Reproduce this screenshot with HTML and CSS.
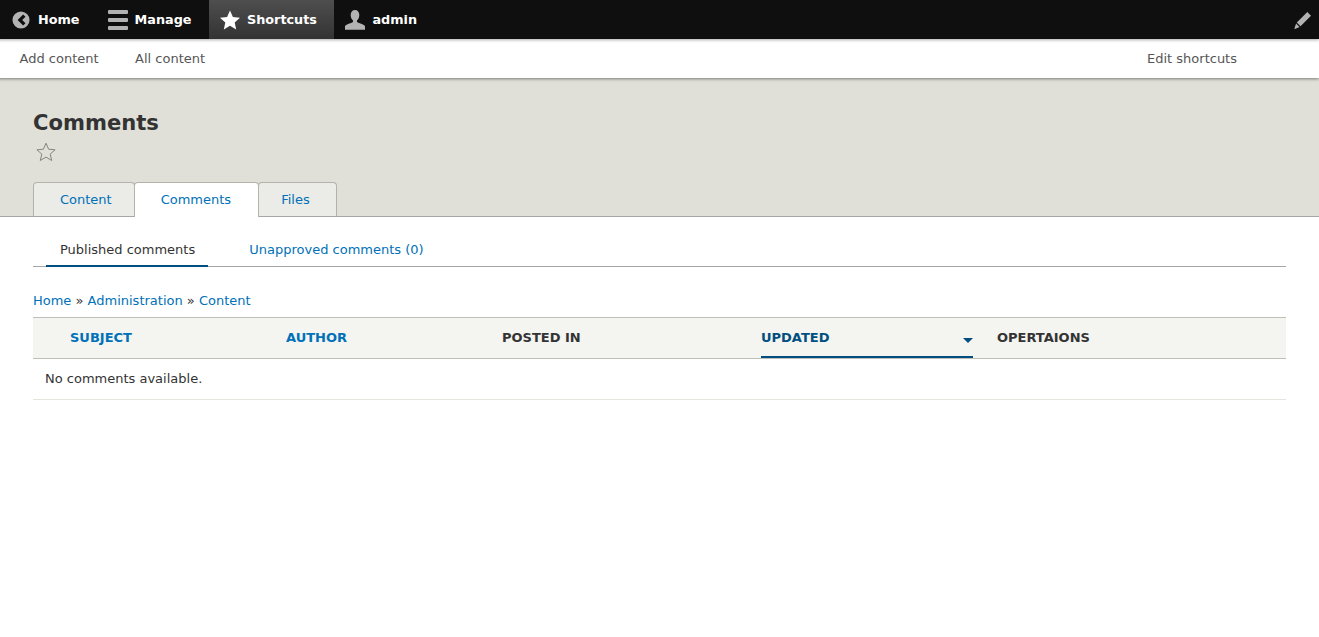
FILE: index.html
```html
<!DOCTYPE html>
<html lang="en">
<head>
<meta charset="utf-8">
<title>Comments</title>
<link rel="stylesheet" href="styles.css">
</head>
<body>
<nav class="toolbar">
  <div class="toolbar-items">
    <a class="tb-item tb-home" href="#">
      <svg class="tb-icon" viewBox="0 0 20 20"><circle cx="10" cy="10" r="9.500" fill="#b3b3b3"/><path d="M12.400 3.800 15 6.400 11.300 10 15 13.600l-2.600 2.600L6.200 10z" fill="#0f0f0f"/></svg>
      <span>Home</span>
    </a>
    <a class="tb-item tb-manage" href="#">
      <svg class="tb-icon" viewBox="0 0 20 20"><g fill="#b3b3b3"><rect y="0" width="20" height="4" rx="1"/><rect y="8" width="20" height="4" rx="1"/><rect y="16" width="20" height="4" rx="1"/></g></svg>
      <span>Manage</span>
    </a>
    <a class="tb-item tb-active" href="#">
      <svg class="tb-icon" viewBox="0 0 20 20"><path d="M10 .5l2.900 6.500 7.100.7-5.300 4.700 1.500 7-6.200-3.600-6.200 3.600 1.500-7L0 7.700l7.100-.7z" fill="#fff"/></svg>
      <span>Shortcuts</span>
    </a>
    <a class="tb-item" href="#">
      <svg class="tb-icon" viewBox="0 0 20 20"><path d="M10 0c2.700 0 4.300 2.100 4.300 5 0 2.300-1 4.400-2.200 5.300-.4.9-.2 1.800.6 2.200 2.500 1 6.300 2 7.300 3.500v3.700H0V16c1-1.500 4.800-2.500 7.300-3.500.8-.4 1-1.300.6-2.200C6.700 9.400 5.700 7.300 5.700 5 5.700 2.100 7.300 0 10 0z" fill="#b3b3b3"/></svg>
      <span>admin</span>
    </a>
  </div>
  <a class="tb-edit" href="#" aria-label="Edit">
    <svg viewBox="0 0 18 18"><path d="M13.300 1 17 4.700 6.500 15.200 2.800 11.500zM2.100 12.500l3.400 3.400L1 18l-.6-.6z" fill="#b3b3b3"/></svg>
  </a>
</nav>
<div class="tray">
  <div class="tray-links">
    <a href="#">Add content</a>
    <a href="#">All content</a>
  </div>
  <a class="tray-edit" href="#">Edit shortcuts</a>
</div>
<header class="page-head">
  <h1>Comments</h1>
  <svg class="fav-star" viewBox="0 0 20 20"><path d="M10 1.200l2.600 6 6.500.6-4.900 4.300 1.500 6.400L10 15.100l-5.700 3.400 1.500-6.400L.9 7.800l6.500-.6z" fill="none" stroke="#85857a" stroke-width="1"/></svg>
  <ul class="tabs">
    <li class="tab-first"><a href="#">Content</a></li>
    <li class="tab-active"><a href="#">Comments</a></li>
    <li class="tab-last"><a href="#">Files</a></li>
  </ul>
</header>
<main class="content">
  <ul class="subtabs">
    <li class="subtab-active"><a href="#">Published comments</a></li>
    <li><a href="#">Unapproved comments (0)</a></li>
  </ul>
  <div class="breadcrumb"><a href="#">Home</a> » <a href="#">Administration</a> » <a href="#">Content</a></div>
  <table class="comments">
    <thead>
      <tr>
        <th class="col-subject"><a href="#">SUBJECT</a></th>
        <th class="col-author"><a href="#">AUTHOR</a></th>
        <th class="col-posted">POSTED IN</th>
        <th class="col-updated"><a href="#" class="sort-active">UPDATED<i class="sort-arrow"></i></a></th>
        <th>OPERTAIONS</th>
      </tr>
    </thead>
    <tbody>
      <tr><td colspan="5">No comments available.</td></tr>
    </tbody>
  </table>
</main>
</body>
</html>
```
FILE: styles.css
```css
* { box-sizing: border-box; }
html, body { margin: 0; padding: 0; }
body {
  font-family: "DejaVu Sans", sans-serif;
  font-size: 13px;
  color: #333;
  background: #fff;
}
a { text-decoration: none; color: #0071b8; }
ul { list-style: none; margin: 0; padding: 0; }

.toolbar {
  display: flex;
  justify-content: space-between;
  height: 39px;
  background: #0f0f0f;
  position: relative;
  z-index: 2;
  box-shadow: -1px 0 3px 1px rgba(0,0,0,.33);
}
.toolbar-items { display: flex; }
.tb-item {
  display: flex;
  align-items: center;
  gap: 7px;
  padding: 0 17px 0 11px;
  color: #fff;
  font-weight: 700;
  font-size: 12.8px;
}
.tb-home { padding-left: 12px; gap: 8px; }
.tb-manage { padding-right: 18px; }
.tb-icon { width: 20px; height: 20px; display: block; flex: none; }
.tb-home .tb-icon { width: 18px; height: 18px; }
.tb-active { background: linear-gradient(#4e4e4e, #333); gap: 6.500px; padding-right: 17.500px; }
.tb-edit { display: flex; align-items: center; padding-right: 7px; }
.tb-edit svg { width: 18px; height: 18px; display: block; }

.tray {
  display: flex;
  justify-content: space-between;
  align-items: center;
  height: 39px;
  padding: 0 82px 0 19.500px;
  background: #fff;
  position: relative;
  z-index: 1;
  box-shadow: -1px 0 3px 1px rgba(0,0,0,.45);
}
.tray a { color: #565656; }
.tray-links { display: flex; gap: 36.500px; }

.page-head {
  height: 139px;
  padding: 31px 2.5% 0;
  background: #e0e0d8;
  border-bottom: 1px solid #a6a6a6;
}
.page-head h1 {
  margin: 0;
  font-size: 21.100px;
  line-height: 28px;
  font-weight: 700;
  color: #333;
}
.fav-star { display: block; width: 20px; height: 20px; margin: 5px 0 0 3px; }
.tabs {
  display: flex;
  margin-top: 20px;
  height: 34px;
}
.tabs li {
  background: #ebebe7;
  border: 1px solid #b3b3ab;
  border-bottom: 0;
  border-radius: 4px 4px 0 0;
  margin-left: -1px;
  height: 34px;
}
.tabs a { display: block; line-height: 33px; }
.tabs .tab-first { margin-left: 0; }
.tab-first a { padding: 0 22px 0 26px; }
.tab-active a { padding: 0 27px 0 26px; }
.tab-last a { padding: 0 26px 0 22px; }
.tabs .tab-active {
  background: #fff;
  height: 35px;
  position: relative;
  z-index: 1;
}

.content { padding: 15px 2.5% 0; }
.subtabs {
  display: flex;
  height: 35px;
  border-bottom: 1px solid #a6a6a6;
  padding-left: 13px;
  gap: 27px;
}
.subtabs li { height: 35px; padding: 0 13px 0 14px; line-height: 36px; }
.subtabs .subtab-active { border-bottom: 2px solid #004f80; }
.subtabs .subtab-active a { color: #333; }
.breadcrumb { margin-top: 25px; line-height: 18px; height: 18px; }

.comments {
  width: 100%;
  margin-top: 7px;
  border-collapse: collapse;
  table-layout: fixed;
}
.comments th {
  height: 41px;
  padding: 0 0 2px;
  text-align: left;
  font-size: 13px;
  font-weight: 700;
  background: #f4f4f0;
  border-top: 1px solid #bfbfba;
  border-bottom: 1px solid #bfbfba;
  color: #333;
}
.comments .col-subject { width: 253px; padding-left: 37px; }
.col-author { width: 216px; }
.col-posted { width: 259px; }
.comments .col-updated { width: 236px; padding-bottom: 0; }
.sort-active {
  display: block;
  position: relative;
  width: 212px;
  height: 40px;
  line-height: 39px;
  color: #004f80;
  border-bottom: 2px solid #004f80;
}
.sort-arrow {
  position: absolute;
  right: 0;
  top: 20px;
  border: 5px solid transparent;
  border-top-color: #004f80;
  border-bottom: 0;
}
.comments td {
  height: 41px;
  padding: 0 12px 2px;
  border-bottom: 1px solid #e6e4df;
}
```
